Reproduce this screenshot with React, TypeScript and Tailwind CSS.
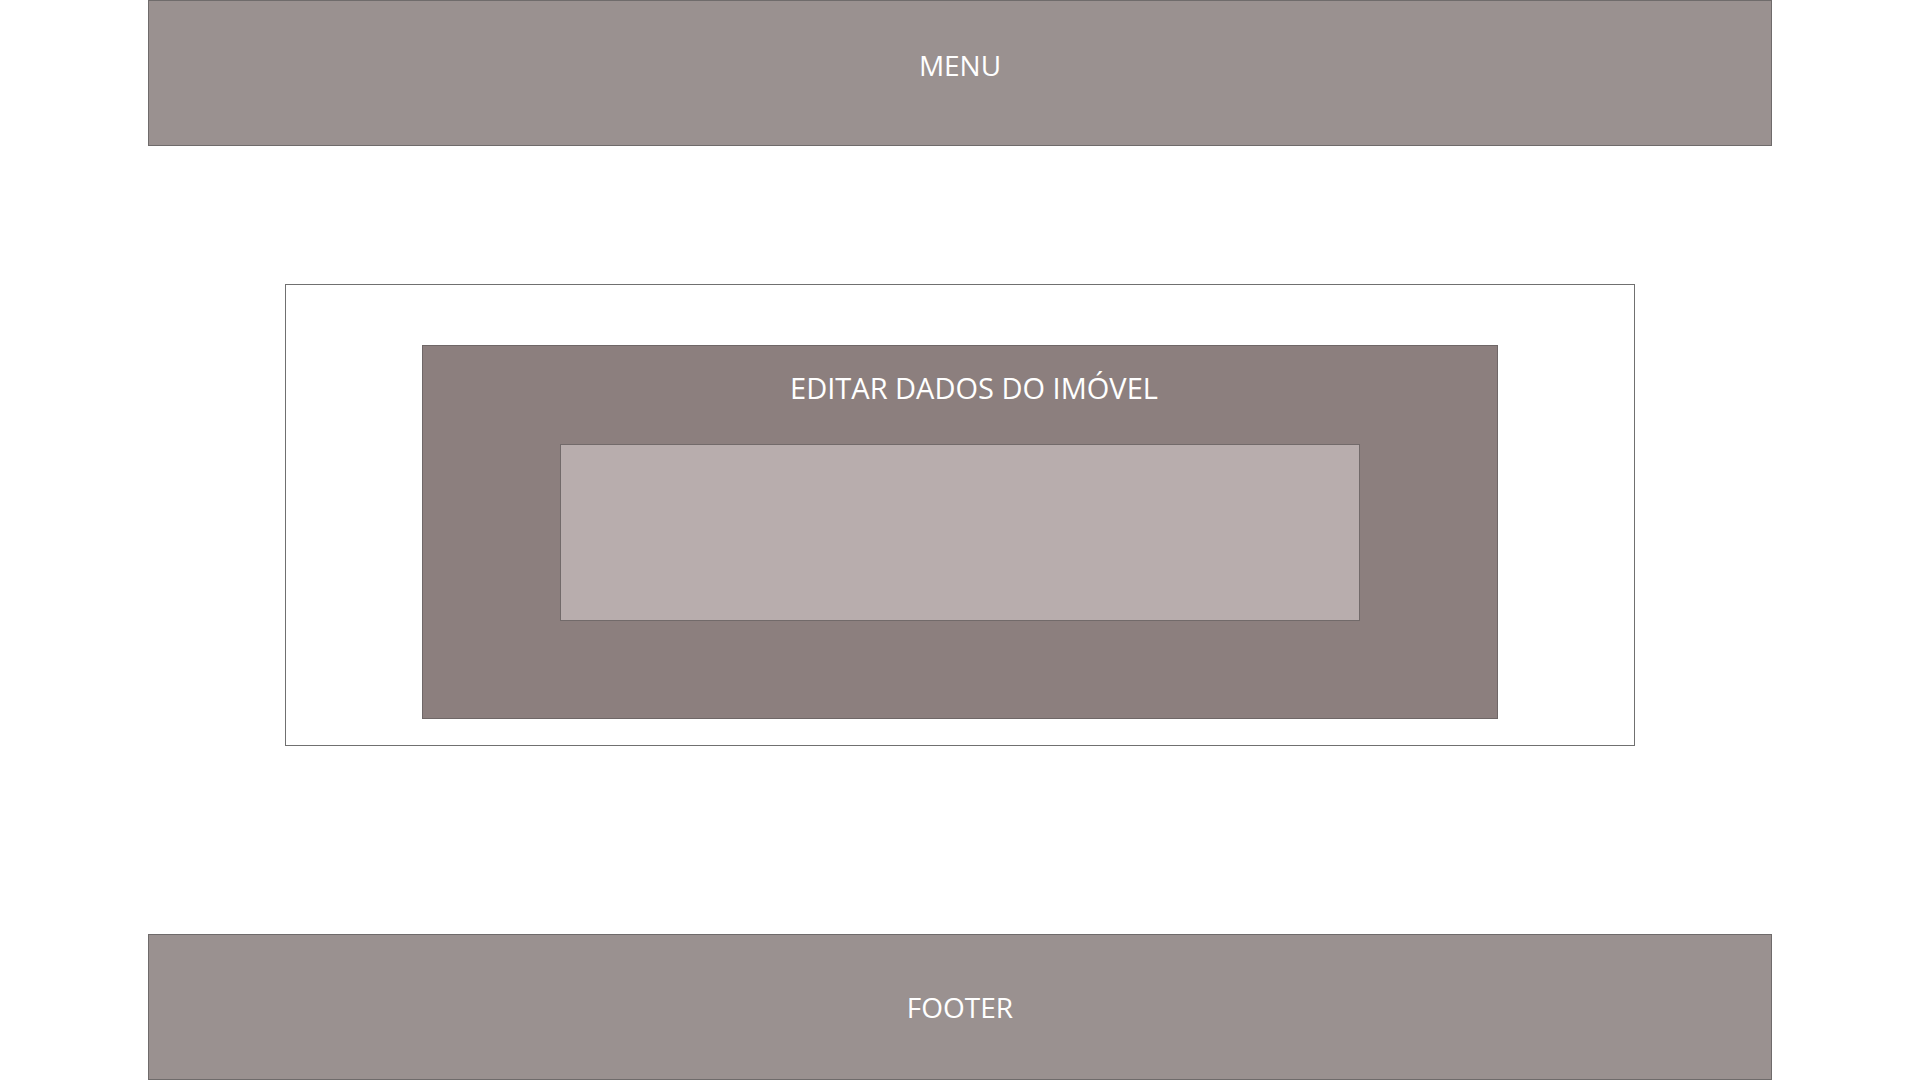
export default function App() {
  return (
    <div className="min-h-screen bg-white flex flex-col items-center font-['Open_Sans',sans-serif]">
      {/* Header */}
      <header className="w-[1624px] h-[146px] bg-[#9a9190] border border-[#6f6b6b] flex items-center justify-center pb-[16px]">
        <span className="text-[28px] text-white">MENU</span>
      </header>

      {/* Main content */}
      <main className="mt-[138px] w-[1350px] h-[462px] border border-[#707070] flex justify-center pt-[60px]">
        <div className="w-[1076px] h-[374px] bg-[#8c7f7e] border border-[#6f6767] flex flex-col items-center">
          <h1 className="mt-[23px] text-[29px] text-white pl-[28px] leading-[38px]">EDITAR DADOS DO IMÓVEL</h1>
          <div className="mt-[37px] w-[800px] h-[177px] bg-[#b8adad] border border-[#726a6a]" />
        </div>
      </main>

      {/* Footer */}
      <footer className="mt-[188px] w-[1624px] h-[146px] bg-[#9a9190] border border-[#6f6b6b] flex items-center justify-center">
        <span className="text-[28px] text-white">FOOTER</span>
      </footer>
    </div>
  );
}
